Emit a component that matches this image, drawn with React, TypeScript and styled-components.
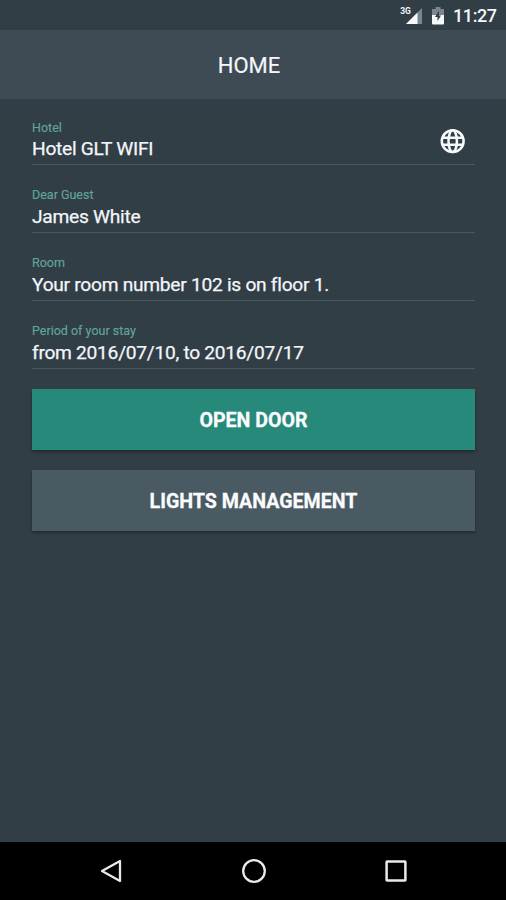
import React from "react";
import styled, { createGlobalStyle } from "styled-components";

const GlobalStyle = createGlobalStyle`
  *, *::before, *::after { box-sizing: border-box; }
  html, body { margin: 0; padding: 0; background: #323e46; }
  body { font-family: Roboto, "Liberation Sans", sans-serif; color: #f3f6fa; }
`;

const Screen = styled.div`
  display: flex;
  flex-direction: column;
  width: 100%;
  height: 100vh;
  overflow: hidden;
  background: #323e46;
`;

const StatusBar = styled.header`
  display: flex;
  justify-content: flex-end;
  align-items: center;
  height: 30px;
  padding: 2px 9px 0 0;
  background: #323e46;
`;

const StatusIcon = styled.svg`
  display: block;
  flex: none;
  margin-right: 9px;
`;

const NetworkLabel = styled.text`
  font: 700 8.5px Roboto, sans-serif;
  fill: #f1f4f6;
`;

const Clock = styled.time`
  width: 44px;
  font-size: 18px;
  font-weight: 500;
  line-height: 28px;
  letter-spacing: -0.4px;
  white-space: nowrap;
`;

const TitleBar = styled.div`
  display: flex;
  align-items: center;
  justify-content: center;
  height: 69px;
  padding: 2px 8px 0 0;
  background: #3e4a54;
`;

const Title = styled.h1`
  margin: 0;
  font-size: 22px;
  font-weight: 400;
  line-height: 28px;
  -webkit-text-stroke: 0.2px currentColor;
`;

const Content = styled.main`
  flex: 1;
  padding: 0 31px 0 32px;
`;

const Field = styled.div<{ $height: number }>`
  display: flex;
  justify-content: space-between;
  align-items: flex-end;
  height: ${(p) => p.$height}px;
  border-bottom: 1px solid #4b575f;
`;

const FieldText = styled.div`
  padding-bottom: 2px;
`;

const Label = styled.div<{ $gap: number }>`
  margin-bottom: ${(p) => p.$gap}px;
  font-size: 12.5px;
  line-height: 16px;
  color: #61a596;
  -webkit-text-stroke: 0.15px currentColor;
`;

const Value = styled.div`
  font-size: 19.2px;
  line-height: 26px;
  letter-spacing: -0.28px;
  white-space: nowrap;
  -webkit-text-stroke: 0.25px currentColor;
`;

const GlobeButton = styled.button`
  display: flex;
  margin: 0 9px 10px 0;
  padding: 0;
  border: 0;
  background: none;
`;

const ActionButton = styled.button<{ $tone: string }>`
  display: flex;
  align-items: center;
  justify-content: center;
  width: 100%;
  height: 61px;
  margin-top: 20px;
  padding: 1px 0 0;
  border: 0;
  background: ${(p) => p.$tone};
  box-shadow: 0 2px 3px rgba(0, 0, 0, 0.35);
  color: #fafcfd;
  font-family: inherit;
  font-size: 19.6px;
  font-weight: 700;
  -webkit-text-stroke: 0.3px currentColor;
`;

const NavBar = styled.nav`
  display: flex;
  justify-content: center;
  align-items: center;
  gap: 118px;
  height: 58px;
  padding-right: 1px;
  background: #000;
`;

const NavIcon = styled.svg`
  display: block;
  flex: none;
`;

const fields = [
  { label: "Hotel", value: "Hotel GLT WIFI", height: 66, gap: 0, globe: true },
  { label: "Dear Guest", value: "James White", height: 68, gap: 1 },
  { label: "Room", value: "Your room number 102 is on floor 1.", height: 68, gap: 1 },
  { label: "Period of your stay", value: "from 2016/07/10, to 2016/07/17", height: 68, gap: 1 },
];

const Globe = () => (
  <svg width="26" height="26" viewBox="0 0 26 26" fill="none" stroke="#f7fafb" strokeWidth="2.5">
    <circle cx="12.7" cy="13.2" r="10.9" />
    <ellipse cx="12.7" cy="13.2" rx="4.2" ry="10.9" />
    <path d="M3 9.7h19.4M3 16.7h19.4" />
  </svg>
);

export default function App() {
  return (
    <Screen>
      <GlobalStyle />
      <StatusBar>
        <StatusIcon width="23" height="20" viewBox="0 0 23 20">
          <path d="M22 2v16H6z" fill="#7b858b" />
          <path d="M17.5 6.5V18H6z" fill="#f6f8f9" />
          <NetworkLabel x="0.2" y="8.2">3G</NetworkLabel>
        </StatusIcon>
        <StatusIcon width="12" height="20" viewBox="0 0 12 20">
          <path d="M3.5 1h5v2H12v7H0V3h3.5z" fill="#7b858b" />
          <path d="M0 9h12v8.5q0 1-1 1H1q-1 0-1-1z" fill="#f6f8f9" />
          <path d="M7 4.5 3 11h2.5v4L9 9.5H7z" fill="#323e46" />
        </StatusIcon>
        <Clock>11:27</Clock>
      </StatusBar>
      <TitleBar>
        <Title>HOME</Title>
      </TitleBar>
      <Content>
        {fields.map((f) => (
          <Field key={f.label} $height={f.height}>
            <FieldText>
              <Label $gap={f.gap}>{f.label}</Label>
              <Value>{f.value}</Value>
            </FieldText>
            {f.globe && (
              <GlobeButton aria-label="Language">
                <Globe />
              </GlobeButton>
            )}
          </Field>
        ))}
        <ActionButton $tone="#268979">OPEN DOOR</ActionButton>
        <ActionButton $tone="#4a5a62">LIGHTS MANAGEMENT</ActionButton>
      </Content>
      <NavBar>
        <NavIcon width="24" height="26" viewBox="0 0 24 26" fill="none" stroke="#e9e9e9" strokeWidth="2.3">
          <path d="M21 3v20L3 13z" strokeLinejoin="round" />
        </NavIcon>
        <NavIcon width="26" height="26" viewBox="0 0 26 26" fill="none" stroke="#e9e9e9" strokeWidth="2.3">
          <circle cx="13" cy="13" r="10.8" />
        </NavIcon>
        <NavIcon width="22" height="22" viewBox="0 0 22 22" fill="none" stroke="#e9e9e9" strokeWidth="2.5">
          <rect x="1.6" y="1.6" width="18.8" height="18.8" rx="0.5" />
        </NavIcon>
      </NavBar>
    </Screen>
  );
}
